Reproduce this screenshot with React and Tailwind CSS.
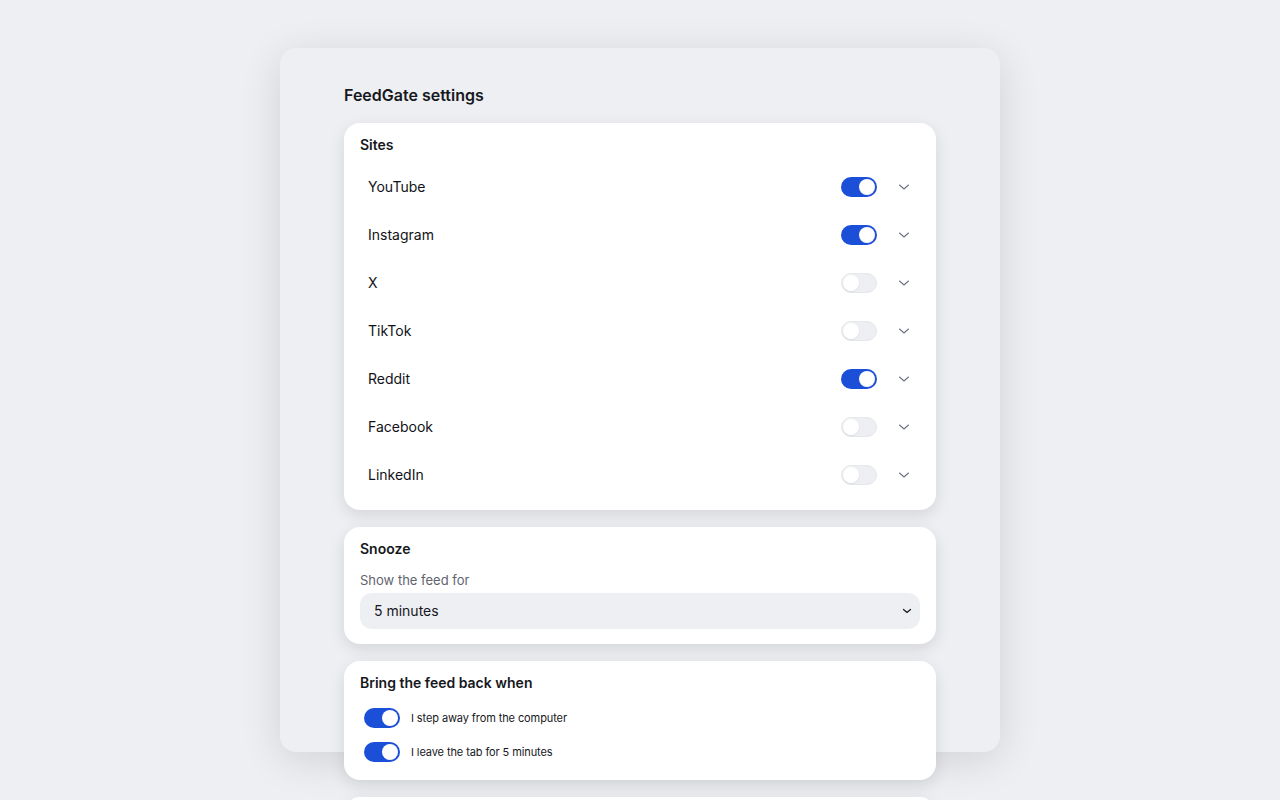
import React, { useState } from 'react'

const font = { fontFamily: 'Inter, "Noto Sans", "Liberation Sans", sans-serif' }

function Toggle({ on, onClick }) {
	return (
		<button
			onClick={onClick}
			className={
				on
					? 'relative w-9 h-5 rounded-full bg-[#1c4fd8] shrink-0'
					: 'relative w-9 h-5 rounded-full bg-[#eeeff3] border border-[#e6e7eb] shrink-0'
			}
		>
			<span
				className={
					on
						? 'absolute top-[2px] left-[18px] w-4 h-4 rounded-full bg-white'
						: 'absolute top-[1px] left-[1px] w-4 h-4 rounded-full bg-white shadow-[0_1px_2px_rgba(0,0,0,0.08)]'
				}
			/>
		</button>
	)
}

function Chevron() {
	return (
		<svg width="12" height="12" viewBox="0 0 12 12" fill="none">
			<path d="M1.5 4l4.5 4 4.5-4" stroke="#6b7280" strokeWidth="1.1" strokeLinecap="round" strokeLinejoin="round" />
		</svg>
	)
}

function SiteRow({ name, on, onToggle }) {
	return (
		<div className="flex items-center h-12 pl-2 pr-1">
			<div className="flex-1 text-sm text-[#111318]">{name}</div>
			<Toggle on={on} onClick={onToggle} />
			<button className="ml-[15px] w-6 h-6 flex items-center justify-center">
				<Chevron />
			</button>
		</div>
	)
}

function Card({ children, className }) {
	return (
		<div className={'bg-white rounded-2xl px-4 pt-3 shadow-[0_5px_16px_rgba(0,0,0,0.11)] ' + className}>{children}</div>
	)
}

export default function App() {
	const [sites, setSites] = useState([
		{ name: 'YouTube', on: true },
		{ name: 'Instagram', on: true },
		{ name: 'X', on: false },
		{ name: 'TikTok', on: false },
		{ name: 'Reddit', on: true },
		{ name: 'Facebook', on: false },
		{ name: 'LinkedIn', on: false },
	])
	const [away, setAway] = useState(true)
	const [leave, setLeave] = useState(true)

	function toggleSite(i) {
		setSites(sites.map((s, j) => (j === i ? { ...s, on: !s.on } : s)))
	}

	return (
		<div className="min-h-screen bg-[#eeeff3] pt-12 overflow-hidden" style={font}>
			<div className="mx-auto w-[720px] h-[704px] rounded-2xl bg-[#eeeff3] shadow-[0_8px_40px_rgba(0,0,0,0.12)] px-16 pt-[35px]">
				<h1 className="text-base leading-6 font-semibold text-[#16181d]">FeedGate settings</h1>
				<div className="mt-4 flex flex-col gap-[17px]">
					<Card className="h-[387px]">
						<div className="text-sm leading-5 font-semibold text-[#16181d]">Sites</div>
						<div className="mt-2">
							{sites.map((s, i) => (
								<SiteRow key={s.name} name={s.name} on={s.on} onToggle={() => toggleSite(i)} />
							))}
						</div>
					</Card>
					<Card className="h-[117px]">
						<div className="text-sm leading-5 font-semibold text-[#16181d]">Snooze</div>
						<div className="mt-[13px] text-[13px] leading-4 text-[#5f6470]">Show the feed for</div>
						<div className="mt-[5px] h-9 rounded-xl bg-[#eeeff3] flex items-center pl-[14px] pr-2">
							<div className="flex-1 text-sm text-[#16181d]">5 minutes</div>
							<svg width="10" height="10" viewBox="0 0 10 10" fill="none">
								<path d="M1.5 3.5L5 6.5l3.5-3" stroke="#16181d" strokeWidth="1.2" strokeLinecap="round" strokeLinejoin="round" />
							</svg>
						</div>
					</Card>
					<Card className="h-[119px]">
						<div className="text-sm leading-5 font-semibold text-[#16181d]">Bring the feed back when</div>
						<div className="mt-[15px] flex flex-col gap-[14px] pl-1">
							<label className="flex items-center gap-[11px]">
								<Toggle on={away} onClick={() => setAway(!away)} />
								<span className="text-[11px] tracking-[-0.1px] text-[#16181d]">I step away from the computer</span>
							</label>
							<label className="flex items-center gap-[11px]">
								<Toggle on={leave} onClick={() => setLeave(!leave)} />
								<span className="text-[11px] tracking-[-0.1px] text-[#16181d]">I leave the tab for 5 minutes</span>
							</label>
						</div>
					</Card>
					<Card className="h-[100px]" />
				</div>
			</div>
		</div>
	)
}
